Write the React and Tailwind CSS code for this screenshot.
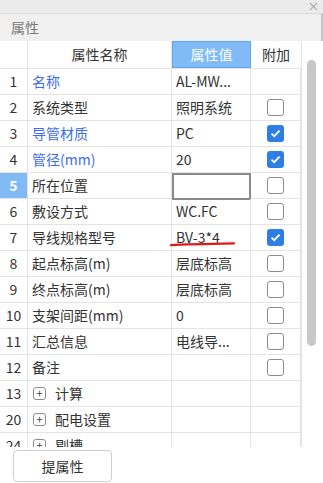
const rows = [
  { n: "1", name: "名称", blue: true, value: "AL-MW...", check: null },
  { n: "2", name: "系统类型", value: "照明系统", check: false },
  { n: "3", name: "导管材质", blue: true, value: "PC", check: true },
  { n: "4", name: "管径(mm)", blue: true, value: "20", check: true },
  { n: "5", name: "所在位置", value: "", check: false, active: true },
  { n: "6", name: "敷设方式", value: "WC.FC", check: false },
  { n: "7", name: "导线规格型号", value: "BV-3*4", check: true, mark: true },
  { n: "8", name: "起点标高(m)", value: "层底标高", check: false },
  { n: "9", name: "终点标高(m)", value: "层底标高", check: false },
  { n: "10", name: "支架间距(mm)", value: "0", check: false },
  { n: "11", name: "汇总信息", value: "电线导...", check: false },
  { n: "12", name: "备注", value: "", check: false },
  { n: "13", name: "计算", group: true, value: "", check: null },
  { n: "20", name: "配电设置", group: true, value: "", check: null },
  { n: "24", name: "剔槽", group: true, value: "", check: null },
];

function Check({ on }) {
  if (on) {
    return (
      <div className="w-[17px] h-[17px] rounded-[3px] bg-[#2f7de6] flex items-center justify-center">
        <svg width="11" height="9" viewBox="0 0 11 9">
          <path d="M1.5 4.6 L4.2 7.2 L9.6 1.6" fill="none" stroke="white" strokeWidth="1.8" />
        </svg>
      </div>
    );
  }
  return <div className="w-[17px] h-[17px] rounded-[3px] border border-[#8c8c8c] bg-white" />;
}

function Row({ r }) {
  return (
    <div className="flex h-[26px] border-b border-[#e4e4e4] text-[14px]">
      <div
        className={
          "w-[28px] shrink-0 border-r border-[#e4e4e4] flex items-center justify-center " +
          (r.active ? "bg-[#80bbf6] text-white font-bold" : "text-[#333]")
        }
      >
        {r.n}
      </div>
      <div className="w-[144px] shrink-0 border-r border-[#e4e4e4] flex items-center pl-[4px]">
        {r.group ? (
          <>
            <div className="w-[13px] h-[13px] border border-[#8c8c8c] rounded-[3px] flex items-center justify-center text-[11px] leading-none text-[#444] mr-[9px] ml-px">
              +
            </div>
            <span className="text-[#333]">{r.name}</span>
          </>
        ) : (
          <span className={r.blue ? "text-[#3b6df2]" : "text-[#333]"}>{r.name}</span>
        )}
      </div>
      <div className="w-[79px] shrink-0 border-r border-[#e4e4e4] relative flex items-center pl-[4px] text-[#333]">
        {r.active ? (
          <div className="absolute left-0 top-0 w-[79px] h-[27px] border-2 border-[#8a8a8a] bg-white" />
        ) : (
          <span className="whitespace-nowrap">{r.value}</span>
        )}
        {r.mark && (
          <svg className="absolute left-[-2px] top-[16px]" width="66" height="6" viewBox="0 0 66 6">
            <path d="M1 4.2 C 14 3.4, 30 3, 64 2.4" fill="none" stroke="#e01818" strokeWidth="2.2" strokeLinecap="round" />
          </svg>
        )}
      </div>
      <div className="w-[50px] shrink-0 border-r border-[#e4e4e4] flex items-center justify-center">
        {r.check !== null && <Check on={r.check} />}
      </div>
    </div>
  );
}

export default function App() {
  return (
    <div
      className="w-[323px] h-[483px] bg-white flex flex-col overflow-hidden"
      style={{ fontFamily: '"Noto Sans CJK SC", "Noto Sans", sans-serif' }}
    >
      <div className="h-[14px] bg-[#ebebeb] border-b border-[#dcdcdc] flex items-center justify-end pr-[5px]">
        <svg width="9" height="9" viewBox="0 0 9 9">
          <path d="M1 1 L8 8 M8 1 L1 8" stroke="#b0b0b0" strokeWidth="1.3" />
        </svg>
      </div>
      <div className="h-[27px] bg-[#f0f0f0] flex items-center pl-[11px] text-[14px] text-[#7a7a7a] border-r-2 border-[#c4c4c4]">
        属性
      </div>
      <div className="flex h-[406px]">
        <div className="w-[302px] overflow-hidden border-r border-[#e4e4e4]">
          <div className="flex h-[28px] border-b border-[#e4e4e4] text-[14px]">
            <div className="w-[28px] shrink-0 border-r border-[#e4e4e4]" />
            <div className="w-[144px] shrink-0 border-r border-[#e4e4e4] flex items-center justify-center text-[#333]">
              属性名称
            </div>
            <div className="w-[79px] shrink-0 bg-[#80bbf6] border border-[#5ea6f0] flex items-center justify-center text-white">
              属性值
            </div>
            <div className="w-[50px] shrink-0 flex items-center justify-center text-[#333]">附加</div>
          </div>
          {rows.map((r) => (
            <Row key={r.n} r={r} />
          ))}
        </div>
        <div className="w-[21px] relative">
          <div className="absolute left-[5px] top-[19px] w-[9px] h-[286px] rounded-full bg-[#c8c8c8]" />
        </div>
      </div>
      <div className="flex-1 bg-white pl-[13px] pt-[3px]">
        <button className="w-[99px] h-[32px] border border-[#cfcfcf] rounded-[4px] bg-white text-[14px] text-[#333]">
          提属性
        </button>
      </div>
    </div>
  );
}
